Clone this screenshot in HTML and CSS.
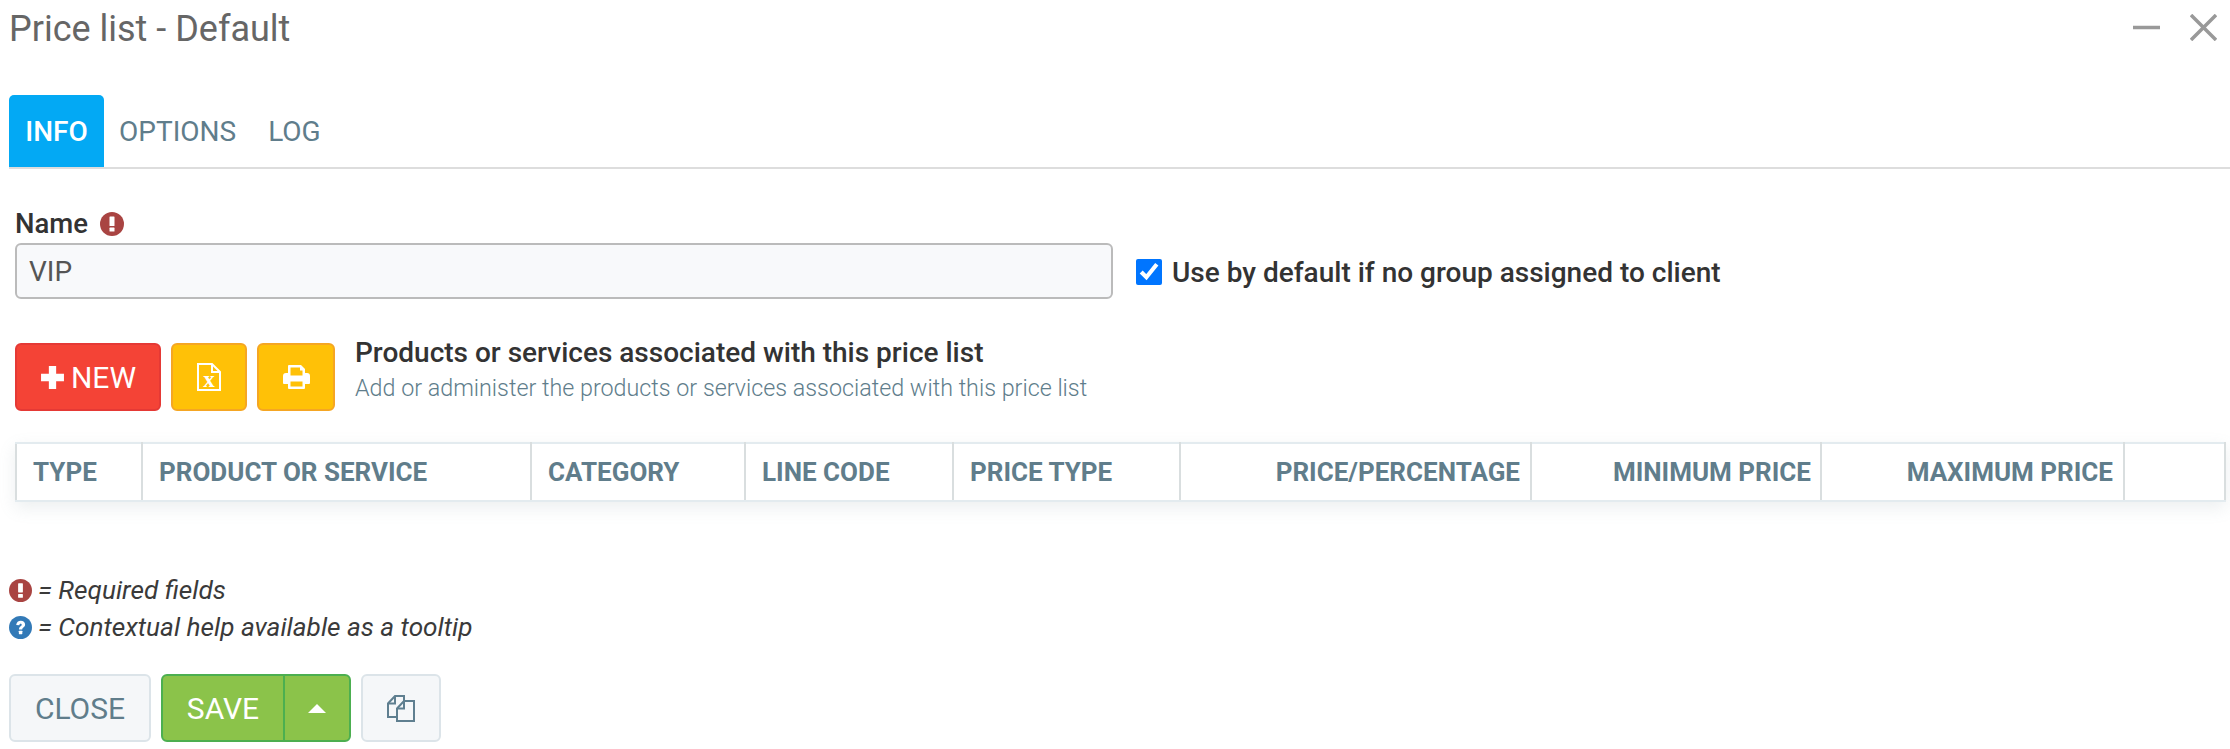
FILE: index.html
```html
<!DOCTYPE html>
<html lang="en">
<head>
<meta charset="utf-8">
<title>Price list - Default</title>
<link rel="stylesheet" href="styles.css">
</head>
<body>
<header class="titlebar">
  <h1>Price list - Default</h1>
  <div class="winctl">
    <svg class="winicon" viewBox="0 0 27 27"><path d="M0 13.500H27" /></svg>
    <svg class="winicon" viewBox="0 0 27 27"><path d="M1 1L26 26M26 1L1 26" /></svg>
  </div>
</header>
<nav class="tabs">
  <a class="tab active">INFO</a>
  <a class="tab">OPTIONS</a>
  <a class="tab">LOG</a>
</nav>
<main class="content">
  <div class="namerow">
    <div class="field">
      <label class="label">Name
        <svg class="ic" viewBox="0 0 24 24"><circle cx="12" cy="12" r="12" fill="#a94442"/><rect x="9.500" y="4.500" width="5" height="9.500" rx=".6" fill="#fff"/><rect x="9.500" y="15.600" width="5" height="4" rx=".6" fill="#fff"/></svg>
      </label>
      <input class="input" type="text" value="VIP">
    </div>
    <label class="check"><input type="checkbox" checked><span>Use by default if no group assigned to client</span></label>
  </div>
  <div class="toolbar">
    <button class="btn red"><svg class="plus" viewBox="0 0 24 24"><path d="M8.500 1h7v7.500H23v7h-7.500V23h-7v-7.500H1v-7h7.500z" fill="#fff"/></svg>NEW</button>
    <button class="btn amber excel"><svg class="tool-x" viewBox="0 0 24 28" fill="none" stroke="#fff" stroke-width="2"><path d="M1 1H15L23 9V27H1Z"/><path d="M15 1V9H23"/><text x="12" y="23.500" font-family="Liberation Serif" font-weight="700" font-size="23" text-anchor="middle" fill="#fff" stroke="none">x</text></svg></button>
    <button class="btn amber print"><svg class="tool-p" viewBox="0 0 27 24"><path fill="#fff" fill-rule="evenodd" d="M5 1Q5 0 6 0H18L22 4V8H24Q27 8 27 11V18Q27 19 26 19H22V23Q22 24 21 24H6Q5 24 5 23V19H1Q0 19 0 18V11Q0 8 3 8H5ZM7.500 2.500V10.500H19.500V5.500H17V2.500ZM7.500 16.500V21.500H19.500V16.500Z"/></svg></button>
    <div class="heading">
      <h2>Products or services associated with this price list</h2>
      <p>Add or administer the products or services associated with this price list</p>
    </div>
  </div>
  <table class="grid">
    <colgroup>
      <col class="c1"><col class="c2"><col class="c3"><col class="c4"><col class="c5"><col class="c6"><col class="c7"><col class="c8"><col class="c9">
    </colgroup>
    <thead>
      <tr>
        <th>TYPE</th><th>PRODUCT OR SERVICE</th><th>CATEGORY</th><th>LINE CODE</th><th>PRICE TYPE</th>
        <th class="num">PRICE/PERCENTAGE</th><th class="num min">MINIMUM PRICE</th><th class="num">MAXIMUM PRICE</th><th></th>
      </tr>
    </thead>
  </table>
</main>
<section class="legend">
  <div class="legend-row"><svg class="ic small" viewBox="0 0 24 24"><circle cx="12" cy="12" r="12" fill="#a94442"/><rect x="9.500" y="4.500" width="5" height="9.500" rx=".6" fill="#fff"/><rect x="9.500" y="15.600" width="5" height="4" rx=".6" fill="#fff"/></svg><em>= Required fields</em></div>
  <div class="legend-row"><svg class="ic small" viewBox="0 0 24 24"><circle cx="12" cy="12" r="12" fill="#337ab7"/><path d="M7.500 9.300C7.800 6.600 9.700 5 12.300 5C14.900 5 16.800 6.700 16.800 8.900C16.800 11.800 13.800 11.900 13.800 14H10.500C10.500 10.800 13.300 10.700 13.300 9.200C13.300 8.400 12.800 8 12.100 8C11.300 8 10.900 8.500 10.700 9.700Z" fill="#fff"/><rect x="10.300" y="15.500" width="3.600" height="3.500" rx=".5" fill="#fff"/></svg><em>= Contextual help available as a tooltip</em></div>
</section>
<footer class="actions">
  <button class="btn light close">CLOSE</button>
  <div class="split">
    <button class="btn green save">SAVE</button>
    <button class="btn green caret"><svg class="caret-ic" viewBox="0 0 18 9"><path d="M9 0L18 9H0Z" fill="#fff"/></svg></button>
  </div>
  <button class="btn light copy"><svg class="copy-ic" viewBox="0 0 28 27" fill="none" stroke="#5f7f90" stroke-width="2"><path d="M10 22H1V8.500L8 1H17V6"/><path d="M1 8.500H8V1"/><path d="M10 13.500L17 6H27V26H10Z"/><path d="M10 13.500H17V6"/></svg></button>
</footer>
</body>
</html>
```

FILE: styles.css
```css
* { box-sizing: border-box; }
html, body { margin: 0; padding: 0; }
body { width: 2230px; height: 749px; overflow: hidden; background: #fff; font-family: Roboto, "Liberation Sans", sans-serif; color: #333; }

.titlebar { height: 95px; padding: 7px 0 0 9px; display: flex; justify-content: space-between; align-items: flex-start; }
.titlebar h1 { margin: 0; font-size: 36px; line-height: 44px; font-weight: 400; color: #666; }
.winctl { display: flex; gap: 30px; padding: 7px 13px 0 0; }
.winicon { width: 27px; height: 27px; fill: none; stroke: #999; stroke-width: 3.500; }

.tabs { margin-left: 9px; height: 74px; border-bottom: 2px solid #ddd; display: flex; }
.tab { height: 72px; display: flex; align-items: center; font-size: 28px; color: #607d8b; padding: 0 17px 0 15px; }
.tab.active { width: 95px; padding: 0; justify-content: center; background: #03a9f4; color: #fff; font-weight: 500; border-radius: 5px 5px 0 0; }

.content { padding: 0 5px 0 15px; }
.namerow { display: flex; align-items: flex-end; padding-top: 36px; }
.field { width: 1098px; }
.label { display: flex; align-items: center; height: 38px; padding-bottom: 1px; font-size: 27.500px; font-weight: 500; color: #333; gap: 12px; }
.ic { width: 24px; height: 24px; flex: none; }
.input { display: block; width: 100%; height: 56px; margin: 0; padding: 0 12px; border: 2px solid #bbb; border-radius: 6px; background: #f8f9fb; font: 400 28px Roboto, sans-serif; color: #555; outline: none; }
.check { display: flex; align-items: center; gap: 10px; margin: 0 0 11px 23px; font-size: 28px; font-weight: 500; height: 32px; }
.check input { width: 26px; height: 26px; margin: 0; accent-color: #0075ff; }

.toolbar { display: flex; gap: 10px; margin-top: 44px; align-items: flex-start; }
.btn { display: flex; align-items: center; justify-content: center; margin: 0; padding: 0; height: 68px; border-radius: 6px; border: 2px solid; font: 400 30px Roboto, sans-serif; }
.red { width: 146px; background: #f44336; border-color: #e53935; color: #fff; gap: 6px; }
.plus { width: 25px; height: 25px; }
.amber { background: #ffc107; border-color: #f5a623; }
.excel { width: 76px; }
.print { width: 78px; }
.tool-x { width: 24px; height: 28px; }
.tool-p { width: 27px; height: 24px; }
.heading { margin-left: 10px; margin-top: -6px; }
.heading h2 { margin: 0; font-size: 28px; line-height: 31px; font-weight: 500; color: #333; }
.heading p { margin: 6px 0 0; font-size: 23.300px; line-height: 28px; font-weight: 300; color: #607d8b; }

.grid { margin-top: 31px; width: 2209px; height: 58px; table-layout: fixed; border-collapse: collapse; box-shadow: 0 6px 16px rgba(120,140,150,.14); }
.c1 { width: 126px; } .c2 { width: 389px; } .c3 { width: 214px; } .c4 { width: 208px; } .c5 { width: 227px; }
.c6 { width: 351px; } .c7 { width: 290px; } .c8 { width: 303px; } .c9 { width: 101px; }
.grid th { border: 2px solid #d9dedf; border-top-color: #e3ebef; border-bottom-color: #e3ebef; padding: 0 16px; height: 58px; text-align: left; font-size: 26px; font-weight: 700; color: #607d8b; white-space: nowrap; }
.grid th.num { text-align: right; padding-right: 10px; }
.grid th.min { padding-right: 9px; }

.legend { margin: 70px 0 0 9px; font-size: 26.200px; line-height: 37px; color: #3a3a3a; }
.legend-row { display: flex; align-items: center; gap: 6px; height: 37px; }
.ic.small { width: 23px; height: 23px; }
.legend em { font-style: italic; }

.actions { display: flex; gap: 10px; margin: 28px 0 0 9px; }
.light { background: #f5f7f9; border-color: #dce4e9; color: #607d8b; }
.close { width: 142px; }
.green { background: #8bc34a; border-color: #4caf50; color: #fff; }
.split { display: flex; }
.save { width: 123px; border-radius: 6px 0 0 6px; border-right-width: 1px; }
.caret { width: 67px; border-radius: 0 6px 6px 0; border-left-width: 1px; }
.caret-ic { width: 18px; height: 9px; }
.copy { width: 80px; }
.copy-ic { width: 28px; height: 27px; }
```
